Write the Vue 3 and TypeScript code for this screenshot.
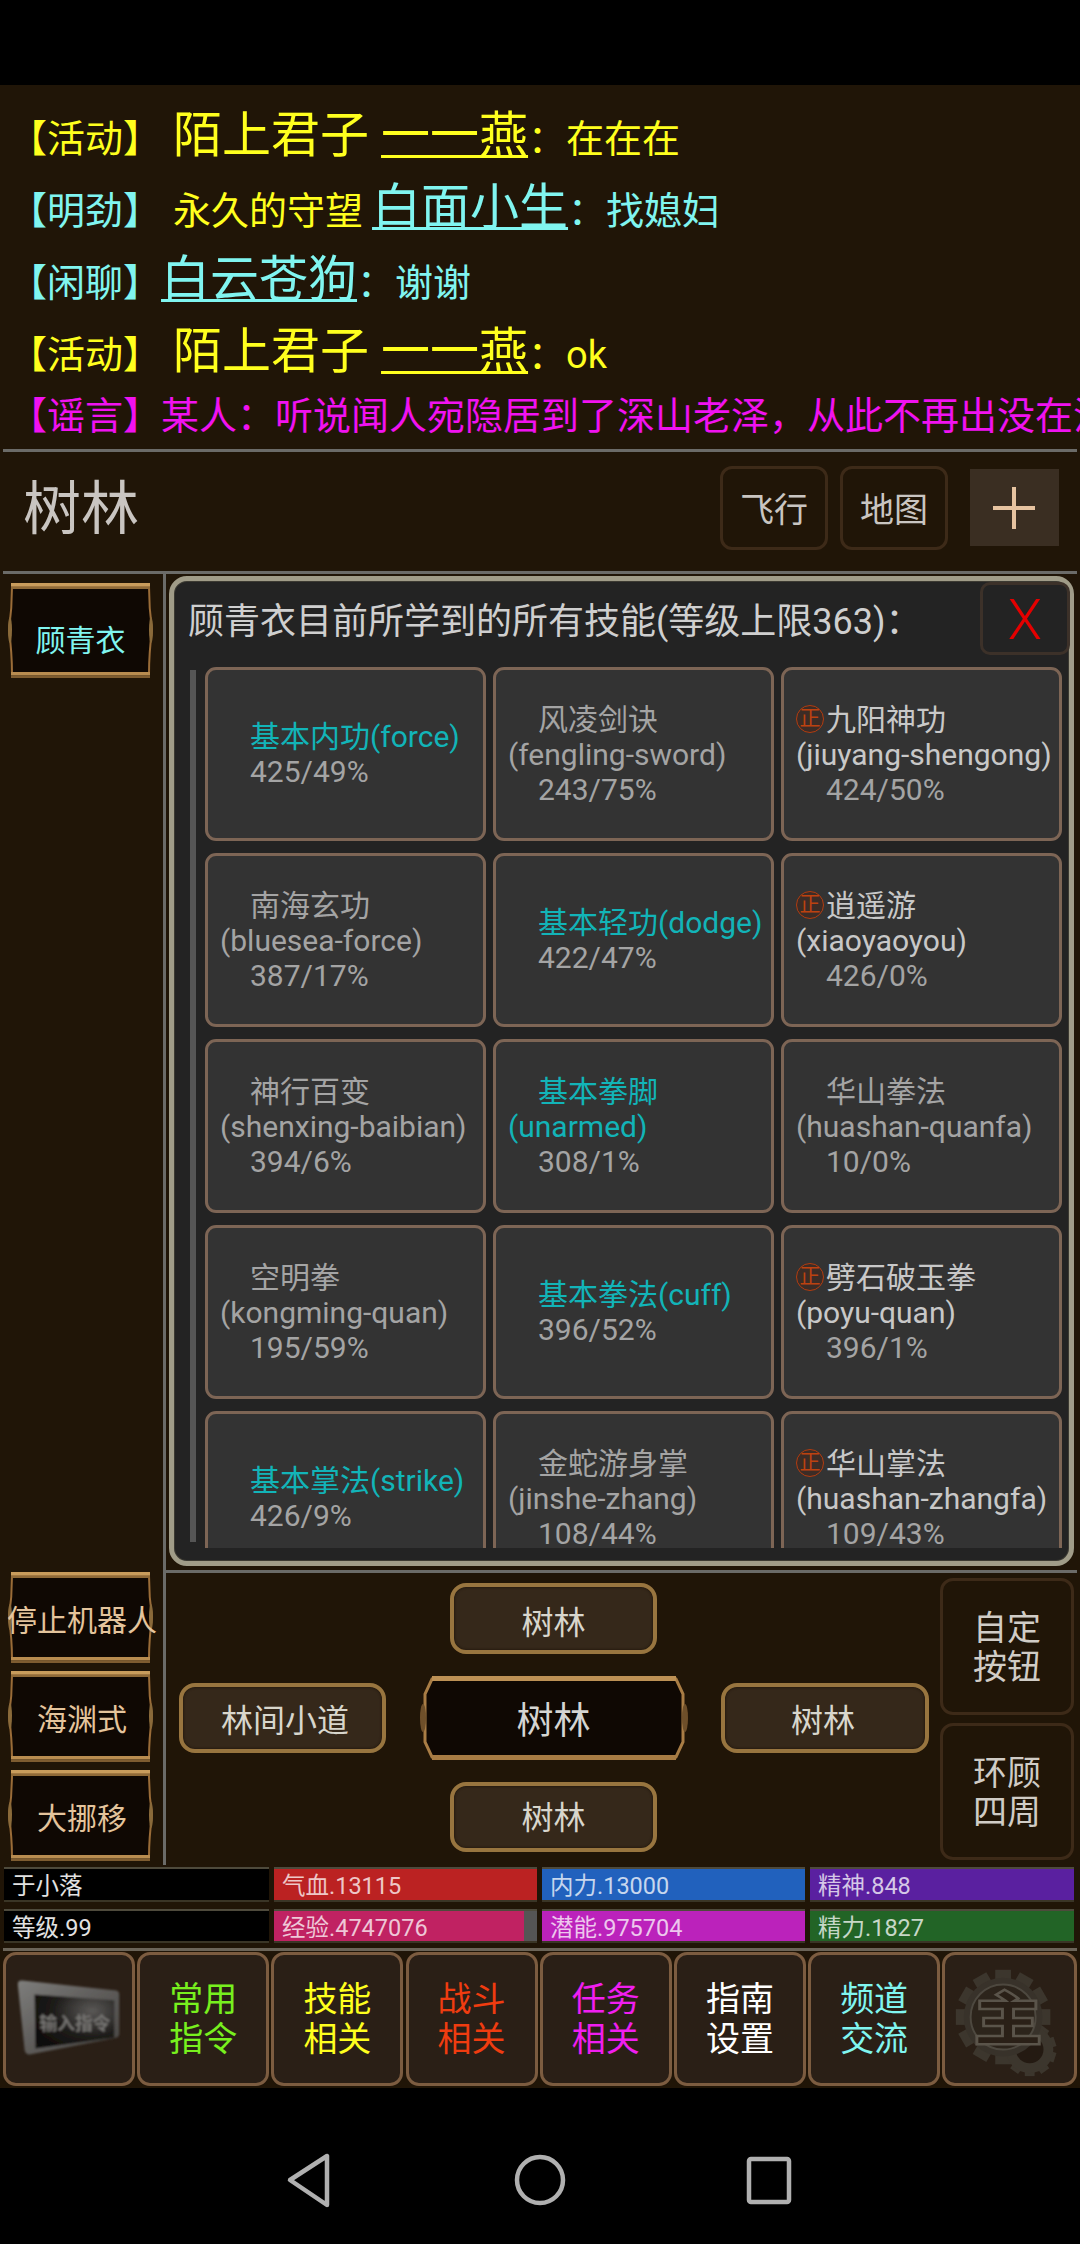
<script setup lang="ts">
interface Seg { t: string; big?: boolean; u?: boolean; c?: string; gap?: boolean; tight?: boolean }
interface Line { c: string; segs: Seg[] }
const Y = '#ffff1e'
const C = '#80f5f0'
const M = '#f012f0'
const lines: Line[] = [
  { c: Y, segs: [{ t: '【活动】' }, { t: '陌上君子', big: true, gap: true }, { t: '一一燕', big: true, u: true, gap: true }, { t: '：在在在' }] },
  { c: C, segs: [{ t: '【明劲】' }, { t: '永久的守望', c: Y, gap: true }, { t: '白面小生', big: true, u: true, tight: true }, { t: '：找媳妇' }] },
  { c: C, segs: [{ t: '【闲聊】' }, { t: '白云苍狗', big: true, u: true }, { t: '：谢谢' }] },
  { c: Y, segs: [{ t: '【活动】' }, { t: '陌上君子', big: true, gap: true }, { t: '一一燕', big: true, u: true, gap: true }, { t: '：ok' }] },
  { c: M, segs: [{ t: '【谣言】某人：听说闻人宛隐居到了深山老泽，从此不再出没在江湖。' }] }
]

interface Skill { name: string; en?: string; lv: string; base?: boolean; zheng?: boolean }
const skills: Skill[] = [
  { name: '基本内功(force)', lv: '425/49%', base: true },
  { name: '风凌剑诀', en: '(fengling-sword)', lv: '243/75%' },
  { name: '九阳神功', en: '(jiuyang-shengong)', lv: '424/50%', zheng: true },
  { name: '南海玄功', en: '(bluesea-force)', lv: '387/17%' },
  { name: '基本轻功(dodge)', lv: '422/47%', base: true },
  { name: '逍遥游', en: '(xiaoyaoyou)', lv: '426/0%', zheng: true },
  { name: '神行百变', en: '(shenxing-baibian)', lv: '394/6%' },
  { name: '基本拳脚', en: '(unarmed)', lv: '308/1%', base: true },
  { name: '华山拳法', en: '(huashan-quanfa)', lv: '10/0%' },
  { name: '空明拳', en: '(kongming-quan)', lv: '195/59%' },
  { name: '基本拳法(cuff)', lv: '396/52%', base: true },
  { name: '劈石破玉拳', en: '(poyu-quan)', lv: '396/1%', zheng: true },
  { name: '基本掌法(strike)', lv: '426/9%', base: true },
  { name: '金蛇游身掌', en: '(jinshe-zhang)', lv: '108/44%' },
  { name: '华山掌法', en: '(huashan-zhangfa)', lv: '109/43%', zheng: true }
]

const sideBottom = ['停止机器人', '海渊式', '大挪移']

interface Bar { t: string; c: string; w: number; name?: boolean }
const bars: Bar[] = [
  { t: '于小落', c: '#000', w: 100, name: true },
  { t: '气血.13115', c: '#bb2222', w: 100 },
  { t: '内力.13000', c: '#2161bd', w: 100 },
  { t: '精神.848', c: '#5a20a0', w: 100 },
  { t: '等级.99', c: '#000', w: 100, name: true },
  { t: '经验.4747076', c: '#c02262', w: 95 },
  { t: '潜能.975704', c: '#bb22bb', w: 100 },
  { t: '精力.1827', c: '#226426', w: 100 }
]

const navs = [
  { a: '常用', b: '指令', c: '#78f01e' },
  { a: '技能', b: '相关', c: '#ffff1e' },
  { a: '战斗', b: '相关', c: '#f03c10' },
  { a: '任务', b: '相关', c: '#f01ef0' },
  { a: '指南', b: '设置', c: '#ffffff' },
  { a: '频道', b: '交流', c: '#80f5f0' }
]
const teeth = Array.from({ length: 12 }, (_, i) => i * 30)
const smallTeeth = Array.from({ length: 10 }, (_, i) => i * 36)
</script>

<template>
  <div class="screen">
    <div class="status"></div>
    <div class="panel">
      <section class="chat">
        <div v-for="(l, i) in lines" :key="i" class="line" :style="{ color: l.c }">
          <span
            v-for="(s, j) in l.segs"
            :key="j"
            :class="{ big: s.big, under: s.u, gap: s.gap, tight: s.tight }"
            :style="s.c ? { color: s.c } : undefined"
          >{{ s.t }}</span>
        </div>
      </section>

      <section class="room">
        <div class="room-name">树林</div>
        <button class="room-btn">飞行</button>
        <button class="room-btn second">地图</button>
        <div class="plus"><span class="plus-h"></span><span class="plus-v"></span></div>
      </section>

      <section class="mid">
        <aside class="side">
          <div class="orn who">
            <svg class="frame" viewBox="0 0 145 95" preserveAspectRatio="none">
              <path d="M4 4 H141 Q141 25 144 47 Q141 70 141 91 H4 Q4 70 1 47 Q4 25 4 4Z" fill="#0f0803" stroke="#9a6c38" stroke-width="2" />
              <rect x="3" y="0" width="139" height="3.5" fill="#c89c5c" />
              <rect x="3" y="3.5" width="139" height="2.5" fill="#8f6a38" />
              <rect x="3" y="89" width="139" height="3.5" fill="#b88c50" />
              <rect x="3" y="92.5" width="139" height="2.5" fill="#7e5c30" />
              <ellipse cx="2" cy="47" rx="2" ry="13" fill="#8a6a3a" />
              <ellipse cx="143" cy="47" rx="2" ry="13" fill="#8a6a3a" />
            </svg>
            <span class="orn-text who-text">顾青衣</span>
          </div>
          <div class="side-list">
            <div v-for="s in sideBottom" :key="s" class="orn">
              <svg class="frame" viewBox="0 0 145 91" preserveAspectRatio="none">
                <path d="M4 4 H141 Q141 25 144 45 Q141 68 141 87 H4 Q4 68 1 45 Q4 25 4 4Z" fill="#0f0803" stroke="#9a6c38" stroke-width="2" />
                <rect x="3" y="0" width="139" height="3.5" fill="#c89c5c" />
                <rect x="3" y="3.5" width="139" height="2.5" fill="#8f6a38" />
                <rect x="3" y="85" width="139" height="3.5" fill="#b88c50" />
                <rect x="3" y="88.5" width="139" height="2.5" fill="#7e5c30" />
                <ellipse cx="2" cy="45" rx="2" ry="13" fill="#8a6a3a" />
                <ellipse cx="143" cy="45" rx="2" ry="13" fill="#8a6a3a" />
              </svg>
              <span class="orn-text">{{ s }}</span>
            </div>
          </div>
        </aside>

        <div class="main">
          <div class="modal">
            <div class="modal-title">顾青衣目前所学到的所有技能(等级上限363)：</div>
            <div class="close">X</div>
            <div class="scroll">
              <div class="scrollbar"></div>
              <div class="skills">
                <div v-for="s in skills" :key="s.name" class="skill">
                  <div class="l" :class="{ ind: !s.zheng, cy: s.base, hi: s.zheng }">
                    <span v-if="s.zheng" class="zheng">正</span>{{ s.name }}
                  </div>
                  <div v-if="s.en" class="l" :class="{ cy: s.base, hi: s.zheng }">{{ s.en }}</div>
                  <div class="l ind">{{ s.lv }}</div>
                </div>
              </div>
            </div>
          </div>

          <div class="nav-area">
            <div class="dirs">
              <div class="dir d-top">树林</div>
              <div class="dir d-left">林间小道</div>
              <div class="here">
                <svg class="frame" viewBox="0 0 268 84" preserveAspectRatio="none">
                  <path d="M12 3 H256 L263 18 V66 L256 81 H12 L5 66 V18Z" fill="#0f0803" stroke="#a97d45" stroke-width="3" />
                  <rect x="12" y="0" width="244" height="5" fill="#bd9155" />
                  <rect x="12" y="79" width="244" height="5" fill="#a87c44" />
                  <ellipse cx="3" cy="42" rx="3" ry="14" fill="#6e4f2a" />
                  <ellipse cx="265" cy="42" rx="3" ry="14" fill="#6e4f2a" />
                </svg>
                <span class="here-text">树林</span>
              </div>
              <div class="dir d-right">树林</div>
              <div class="dir d-bottom">树林</div>
            </div>
            <div class="tools">
              <div class="tool">自定<br />按钮</div>
              <div class="tool">环顾<br />四周</div>
            </div>
          </div>
        </div>
      </section>

      <section class="stats">
        <div v-for="b in bars" :key="b.t" class="bar" :class="{ 'bar-name': b.name }">
          <div class="bar-fill" :style="{ width: b.w + '%', background: b.c }"></div>
          <span class="bar-text">{{ b.t }}</span>
        </div>
      </section>

      <div class="sep"></div>

      <section class="menu">
        <div class="menu-btn">
          <svg class="ico" width="128" height="128" viewBox="0 0 130 128">
            <defs>
              <linearGradient id="keyOuter" x1="0" y1="0" x2="1" y2="1">
                <stop offset="0" stop-color="#7e7e7c" />
                <stop offset="0.5" stop-color="#5e5c5a" />
                <stop offset="1" stop-color="#484644" />
              </linearGradient>
              <radialGradient id="keyInner" cx="0.72" cy="0.3" r="0.8">
                <stop offset="0" stop-color="#5a5856" />
                <stop offset="0.6" stop-color="#1e1c1a" />
                <stop offset="1" stop-color="#100e0c" />
              </radialGradient>
              <filter id="soft"><feGaussianBlur stdDeviation="1" /></filter>
            </defs>
            <g filter="url(#soft)">
              <path d="M18 25 L113 35 Q116 36 116 39 L116 79 Q116 82 113 83 L25 100 Q21 100 20 96 L13 29 Q13 24 18 25Z" fill="url(#keyOuter)" />
              <path d="M30 39 L111 45 L111 83 L31 94Z" fill="url(#keyInner)" />
              <text x="71" y="75" text-anchor="middle" class="key-text">输入指令</text>
            </g>
          </svg>
        </div>
        <div v-for="n in navs" :key="n.a + n.b" class="menu-btn" :style="{ color: n.c }">
          <span>{{ n.a }}<br />{{ n.b }}</span>
        </div>
        <div class="menu-btn">
          <svg class="ico" width="128" height="128" viewBox="0 0 130 128">
            <g fill="#3c362d">
              <g v-for="r in smallTeeth" :key="'s' + r" :transform="`rotate(${r} 85 95)`">
                <rect x="80" y="68" width="10" height="10" />
              </g>
              <g v-for="r in teeth" :key="'b' + r" :transform="`rotate(${r} 58 62)`">
                <rect x="50" y="14" width="16" height="14" />
              </g>
            </g>
            <circle cx="85" cy="95" r="24" fill="#3c362d" />
            <circle cx="85" cy="95" r="14" fill="#241a12" />
            <circle cx="58" cy="62" r="40" fill="#38322a" />
            <circle cx="58" cy="62" r="33" fill="#2c241b" stroke="#4d483f" stroke-width="2" />
            <text transform="translate(63 63) scale(1 0.84)" y="26" text-anchor="middle" class="gear-text">主</text>
          </svg>
        </div>
      </section>
    </div>

    <nav class="sysnav">
      <svg width="1080" height="156" viewBox="0 0 1080 156">
        <g fill="none" stroke="#b0b0b0" stroke-width="4.5" stroke-linejoin="round">
          <path d="M290 92 L327 68 V117Z" />
          <circle cx="540" cy="92" r="23" />
          <rect x="749" y="71" width="40" height="43" rx="2" />
        </g>
      </svg>
    </nav>
  </div>
</template>

<style>
html, body { margin: 0; background: #000; }
</style>

<style scoped>
.screen {
  width: 1080px;
  height: 2244px;
  background: #000;
  overflow: hidden;
  display: flex;
  flex-direction: column;
  font-family: Roboto, "Noto Sans CJK SC", sans-serif;
}
.status { height: 85px; flex: none; }
.panel {
  height: 2003px;
  flex: none;
  background: #201507;
  display: flex;
  flex-direction: column;
}

/* chat */
.chat {
  height: 364px;
  flex: none;
  padding: 15px 0 0 9px;
  box-sizing: border-box;
  overflow: hidden;
}
.line {
  height: 72px;
  line-height: 72px;
  font-size: 38px;
  white-space: nowrap;
}
.line:last-child { height: 56px; line-height: 56px; }
.big { font-size: 49px; }
.under { text-decoration: underline; text-decoration-thickness: 3px; text-underline-offset: 3px; }
.gap { margin-left: 12px; }
.tight { margin-left: 9px; }

/* room */
.room {
  height: 125px;
  flex: none;
  box-sizing: border-box;
  margin: 0 3px;
  border-top: 3px solid #6b6b68;
  border-bottom: 3px solid #6b6b68;
  display: flex;
  align-items: center;
}
.room-name {
  font-size: 58px;
  line-height: 66px;
  color: #c9c5c1;
  margin: -6px 0 0 20px;
  flex: 1;
}
.room-btn {
  width: 108px;
  height: 84px;
  box-sizing: border-box;
  background: transparent;
  border: 3px solid #3d2a18;
  border-radius: 12px;
  color: #c9c5c1;
  font: 34px Roboto, "Noto Sans CJK SC", sans-serif;
  padding: 0;
  margin-top: -8px;
}
.second { margin-left: 12px; }
.plus {
  width: 89px;
  height: 77px;
  margin: -8px 18px 0 22px;
  background: #3a2e22;
  position: relative;
}
.plus-h, .plus-v { position: absolute; background: #e6c3a0; }
.plus-h { left: 23px; top: 37px; width: 42px; height: 4px; }
.plus-v { left: 42px; top: 18px; width: 4px; height: 42px; }

/* middle */
.mid { height: 1291px; flex: none; display: flex; }
.side {
  width: 166px;
  flex: none;
  box-sizing: border-box;
  border-right: 3px solid #6b6b68;
  padding: 9px 0 4px 8px;
  display: flex;
  flex-direction: column;
  justify-content: space-between;
}
.side-list { display: flex; flex-direction: column; gap: 8px; }
.orn {
  width: 145px;
  height: 91px;
  position: relative;
  display: flex;
  align-items: center;
  justify-content: center;
}
.who { height: 95px; }
.frame { position: absolute; inset: 0; width: 100%; height: 100%; }
.orn-text {
  position: relative;
  font-size: 30px;
  color: #e4c49c;
  white-space: nowrap;
  margin-left: 3px;
}
.who-text { color: #80f5f0; margin: 14px 0 0; }

.main { flex: 1; min-width: 0; display: flex; flex-direction: column; }
.modal {
  position: relative;
  margin: 2px 0 0 3px;
  width: 905px;
  height: 990px;
  flex: none;
  box-sizing: border-box;
  background: #232323;
  border: 5px solid #a09c88;
  border-radius: 18px;
  box-shadow: inset 0 0 0 1px #3c3a32;
}
.modal-title {
  height: 86px;
  box-sizing: border-box;
  padding: 14px 0 0 14px;
  font-size: 36px;
  line-height: 54px;
  color: #cfcfcf;
  white-space: nowrap;
}
.close {
  position: absolute;
  top: 1px;
  right: -1px;
  width: 90px;
  height: 73px;
  box-sizing: border-box;
  border: 3px solid #3c3129;
  border-radius: 10px;
  color: #e40000;
  font-size: 56px;
  font-weight: 300;
  line-height: 70px;
  text-align: center;
}
.scroll {
  height: 881px;
  display: flex;
  padding-left: 16px;
  overflow: hidden;
}
.scrollbar {
  width: 6px;
  height: 872px;
  margin: 3px 9px 0 0;
  background: #555;
  flex: none;
}
.skills {
  display: grid;
  grid-template-columns: repeat(3, 281px);
  grid-auto-rows: 174px;
  column-gap: 7px;
  row-gap: 12px;
  align-content: start;
}
.skill {
  box-sizing: border-box;
  background: #333333;
  border: 3px solid #7d6555;
  border-radius: 11px;
  padding: 0 12px;
  display: flex;
  flex-direction: column;
  justify-content: center;
  font-size: 30px;
  line-height: 35px;
  color: #a4a4a4;
  white-space: nowrap;
}
.l { display: flex; align-items: center; height: 35px; }
.ind { padding-left: 30px; }
.cy { color: #12b4b8; }
.hi { color: #c8c8c8; }
.zheng {
  width: 28px;
  height: 28px;
  box-sizing: border-box;
  flex: none;
  margin-right: 2px;
  border: 1.5px solid #b23c10;
  border-radius: 50%;
  background: #3c2c26;
  color: #bd4210;
  font-size: 21px;
  line-height: 24px;
  text-align: center;
}

.nav-area {
  margin: 4px 3px 0 0;
  border-top: 3px solid #6b6b68;
  flex: 1;
  display: flex;
  padding-left: 13px;
}
.dirs {
  width: 750px;
  margin-top: 10px;
  display: grid;
  grid-template-columns: 207px 268px 208px;
  grid-template-rows: 71px 84px 70px;
  column-gap: 33.5px;
  row-gap: 22px;
  height: 269px;
}
.dir {
  box-sizing: border-box;
  background: #35281a;
  border: 4px solid #98753f;
  border-radius: 16px;
  box-shadow: inset 0 0 3px #1a1006;
  color: #d8d6cc;
  font-size: 32px;
  display: flex;
  align-items: center;
  justify-content: center;
}
.d-top, .d-bottom { grid-column: 2; width: 207px; justify-self: center; }
.d-top { grid-row: 1; padding-top: 2px; }
.d-bottom { grid-row: 3; padding-bottom: 4px; }
.d-left, .d-right { grid-row: 2; height: 70px; align-self: center; }
.d-left { grid-column: 1; padding-left: 5px; }
.d-right { grid-column: 3; padding-right: 4px; }
.here {
  grid-column: 2;
  grid-row: 2;
  position: relative;
  display: flex;
  align-items: center;
  justify-content: center;
}
.here-text { position: relative; font-size: 37px; color: #d4d4d2; }
.tools {
  width: 134px;
  margin: 5px 0 0 11px;
  display: flex;
  flex-direction: column;
  gap: 8px;
}
.tool {
  height: 137px;
  box-sizing: border-box;
  border: 3px solid #3d2a18;
  border-radius: 13px;
  padding-top: 3px;
  color: #d0ccc6;
  font-size: 34px;
  line-height: 39px;
  display: flex;
  align-items: center;
  justify-content: center;
  text-align: center;
}

/* stats */
.stats {
  padding: 2px 0 0 4px;
  display: grid;
  grid-template-columns: 265px 263px 263px 264px;
  grid-template-rows: 35px 34px;
  column-gap: 5px;
  row-gap: 7px;
  flex: none;
}
.bar {
  position: relative;
  box-sizing: border-box;
  background: #555;
  border-top: 2px solid #4e4a3c;
  border-bottom: 2px solid #3a3526;
  overflow: hidden;
}
.bar-name { background: #000; }
.bar-fill { position: absolute; left: 0; top: 0; bottom: 0; }
.bar-text {
  position: relative;
  display: block;
  padding-left: 8px;
  font-size: 23.5px;
  line-height: 34px;
  color: rgba(255, 255, 255, 0.75);
  white-space: nowrap;
}
.bar-name .bar-text { color: #e2e2e2; }

.sep { height: 3px; margin: 5px 3px 1px; background: #6b6458; flex: none; }

.menu {
  height: 134px;
  flex: none;
  padding: 0 3px;
  display: grid;
  grid-template-columns: repeat(7, 132px) 1fr;
  column-gap: 2.2px;
}
.menu-btn {
  box-sizing: border-box;
  background: #2a1f16;
  border: 3px solid #7c5c40;
  border-radius: 13px;
  font-size: 34px;
  line-height: 40px;
  text-align: center;
  display: flex;
  align-items: center;
  justify-content: center;
  overflow: hidden;
}
.ico { flex: none; }
.key-text {
  font-family: "Noto Sans CJK SC", sans-serif;
  font-size: 18px;
  font-weight: 700;
  fill: #757371;
}
.gear-text {
  font-family: "Noto Sans CJK SC", sans-serif;
  font-size: 70px;
  font-weight: 900;
  fill: #2a2017;
  stroke: #5a544a;
  stroke-width: 3px;
}

.sysnav { height: 156px; flex: none; }
.sysnav svg { display: block; }
</style>
